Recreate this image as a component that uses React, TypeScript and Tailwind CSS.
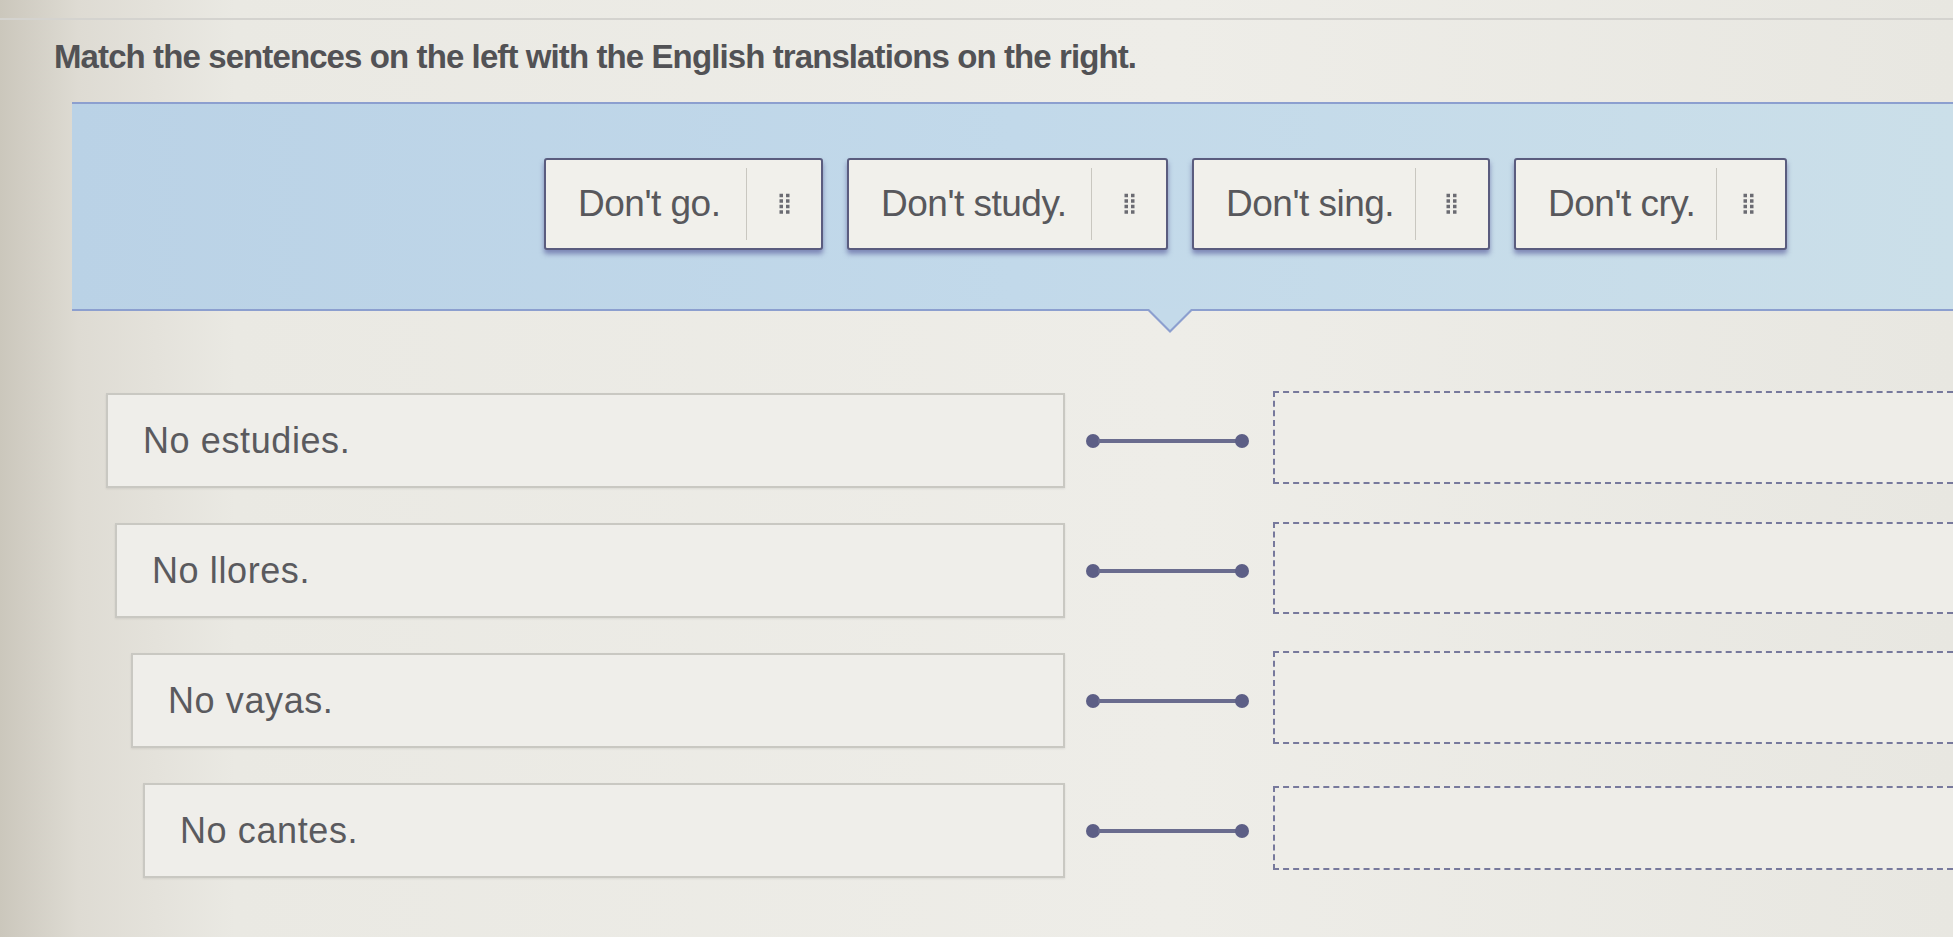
import React from 'react';

// drag tiles (English) and drop rows (Spanish prompts)
const tiles = [
  { id: 'go', label: "Don't go.", w: 'w-[279px]', divider: 'mr-[74px]' },
  { id: 'study', label: "Don't study.", w: 'w-[321px]', divider: 'mr-[74px]' },
  { id: 'sing', label: "Don't sing.", w: 'w-[298px]', divider: 'mr-[72px]' },
  { id: 'cry', label: "Don't cry.", w: 'w-[273px]', divider: 'mr-[68px]' },
];

const prompts = [
  { id: 'estudies', text: 'No estudies.', indent: 'pl-[106px]', drop: 'h-[93px]' },
  { id: 'llores', text: 'No llores.', indent: 'pl-[115px]', drop: 'h-[92px]' },
  { id: 'vayas', text: 'No vayas.', indent: 'pl-[131px]', drop: 'h-[93px]' },
  { id: 'cantes', text: 'No cantes.', indent: 'pl-[143px]', drop: 'h-[84px]' },
];

function Grip() {
  return (
    <svg width="11" height="22" viewBox="0 0 11 22" className="text-[#6b6b72]">
      {[2.5, 8, 13.5, 19].map((y) => (
        <g key={y}>
          <rect x="0.5" y={y - 1.75} width="3.5" height="3.5" fill="currentColor" />
          <rect x="7" y={y - 1.75} width="3.5" height="3.5" fill="currentColor" />
        </g>
      ))}
    </svg>
  );
}

function Tile({ label, w, divider }: { label: string; w: string; divider: string }) {
  return (
    <div
      className={`${w} h-[92px] shrink-0 relative flex items-center bg-[#f1f0eb] border-2 border-[#5a5c7e] rounded-[3px] shadow-[0_4px_5px_rgba(70,70,140,0.55)]`}
    >
      <span className="pl-[32px] text-[37px] tracking-[-0.5px] text-[#58585c]">{label}</span>
      <div className={`absolute top-[8px] bottom-[8px] right-0 ${divider} border-l border-[#c9c7c0]`} />
      <div className="absolute right-[31px] top-1/2 -translate-y-1/2">
        <Grip />
      </div>
    </div>
  );
}

function Connector() {
  return (
    <div className="w-[208px] shrink-0 flex items-center pl-[21px] pr-[24px]">
      <div className="w-[14px] h-[14px] rounded-full bg-[#5d5f86] shrink-0" />
      <div className="flex-1 h-[4px] bg-[#6a6c8e] -mx-[2px]" />
      <div className="w-[14px] h-[14px] rounded-full bg-[#5d5f86] shrink-0" />
    </div>
  );
}

export default function App() {
  return (
    <div
      className="w-full h-[937px] overflow-hidden bg-[linear-gradient(90deg,#cbc7bc_0%,#dedbd3_4%,#eae9e3_12%,#eeede8_60%,#e8e7e1_100%)]"
      style={{ fontFamily: '"Liberation Sans", Arial, sans-serif' }}
    >
      <div className="mt-[18px] border-t-2 border-[#d4d3cf]" />

      <h1 className="pl-[54px] pt-[18px] text-[33px] leading-[38px] font-bold tracking-[-0.9px] text-[#525255]">
        Match the sentences on the left with the English translations on the right.
      </h1>

      {/* tile tray */}
      <div className="ml-[72px] mt-[26px] relative">
        <div className="h-[209px] bg-[linear-gradient(90deg,#bad2e6_0%,#c2d9ea_50%,#cbdfe9_100%)] border-t-2 border-b-2 border-[#8c9fcf] flex items-start pl-[472px] pt-[54px] gap-[24px]">
          {tiles.map((t) => (
            <Tile key={t.id} label={t.label} w={t.w} divider={t.divider} />
          ))}
        </div>
        <div className="absolute left-[1074px] -bottom-[22px] w-0 h-0 border-l-[24px] border-r-[24px] border-t-[24px] border-l-transparent border-r-transparent border-t-[#8c9fcf]" />
        <div className="absolute left-[1077px] -bottom-[19px] w-0 h-0 border-l-[21px] border-r-[21px] border-t-[21px] border-l-transparent border-r-transparent border-t-[#c4daea]" />
      </div>

      {/* prompt rows */}
      <div className="mt-[82px] flex flex-col gap-[35px]">
        {prompts.map((p) => (
          <div key={p.id} className="flex items-center">
            <div className={`w-[1065px] shrink-0 ${p.indent}`}>
              <div className="h-[95px] flex items-center bg-[#efeeea] border-2 border-[#c9c8c2] shadow-[0_1px_2px_rgba(0,0,0,0.08)]">
                <span className="pl-[35px] text-[36px] tracking-[0.6px] text-[#5a5a5e]">{p.text}</span>
              </div>
            </div>
            <Connector />
            <div
              className={`flex-1 ${p.drop} -mt-[6px] border-l-2 border-t-2 border-b-2 border-dashed border-[#77799c] bg-[#eeede8]`}
            />
          </div>
        ))}
      </div>
    </div>
  );
}
